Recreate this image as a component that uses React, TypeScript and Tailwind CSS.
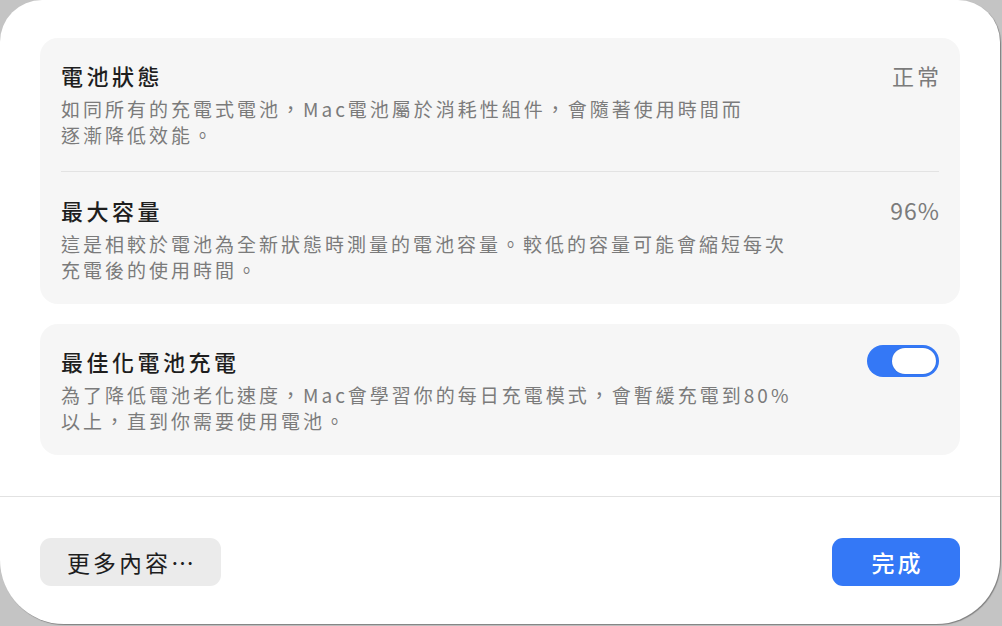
const FONT = "font-['Noto_Sans_CJK_TC','Noto_Sans',sans-serif]"

function Row({ title, desc, value }: { title: string; desc: string[]; value?: React.ReactNode }) {
  return (
    <div className="flex items-start justify-between">
      <div>
        <div className="text-[22px]/[30px] font-medium text-[#1e1e1e] tracking-[3.5px]">{title}</div>
        <div className="mt-[6px] text-[19px]/[26px] text-[#7b7b7b] tracking-[3px]">
          {desc.map((l, i) => (
            <div key={i}>{l}</div>
          ))}
        </div>
      </div>
      {value}
    </div>
  )
}

export default function App() {
  return (
    <div className={`w-[1002px] h-[626px] bg-[#c4c4c4] overflow-hidden ${FONT}`}>
      <div className="w-[1000px] h-[624px] bg-white rounded-t-[42px] rounded-b-[64px] shadow-[1px_1px_1px_rgba(0,0,0,0.35)] flex flex-col">
        <div className="px-10 pt-[38px] flex flex-col gap-[20px]">
          <div className="bg-[#f6f6f6] rounded-[18px] px-[21px] pt-[22px] pb-[21px]">
            <Row
              title="電池狀態"
              desc={['如同所有的充電式電池，Mac電池屬於消耗性組件，會隨著使用時間而', '逐漸降低效能。']}
              value={<div className="text-[22px]/[30px] text-[#7b7b7b] tracking-[3px] mr-[-3px]">正常</div>}
            />
            <div className="h-px bg-[#e3e3e3] mt-[23px] mb-[23px]" />
            <Row
              title="最大容量"
              desc={['這是相較於電池為全新狀態時測量的電池容量。較低的容量可能會縮短每次', '充電後的使用時間。']}
              value={<div className="text-[23px]/[30px] text-[#7b7b7b] tracking-[1px] mr-[-1px]">96%</div>}
            />
          </div>
          <div className="bg-[#f6f6f6] rounded-[18px] px-[21px] pt-[22px] pb-[21px]">
            <Row
              title="最佳化電池充電"
              desc={['為了降低電池老化速度，Mac會學習你的每日充電模式，會暫緩充電到80%', '以上，直到你需要使用電池。']}
              value={
                <div className="mt-[-1px] w-[72px] h-[32px] rounded-full bg-[#3478f6] flex items-center justify-end pr-[3px]">
                  <div className="w-[44px] h-[26px] rounded-full bg-white shadow-[0_0_1px_rgba(0,0,0,0.3)]" />
                </div>
              }
            />
          </div>
        </div>
        <div className="mt-[41px] h-px bg-[#e2e2e2]" />
        <div className="flex justify-between px-10 pt-[41px]">
          <button className="w-[181px] h-[48px] rounded-[11px] bg-[#ebebeb] text-[23px] text-[#1e1e1e] tracking-[3px] pl-[3px]">
            更多內容⋯
          </button>
          <button className="w-[128px] h-[48px] rounded-[11px] bg-[#3478f6] text-[23px] text-white font-medium tracking-[3px] pl-[3px]">
            完成
          </button>
        </div>
      </div>
    </div>
  )
}
